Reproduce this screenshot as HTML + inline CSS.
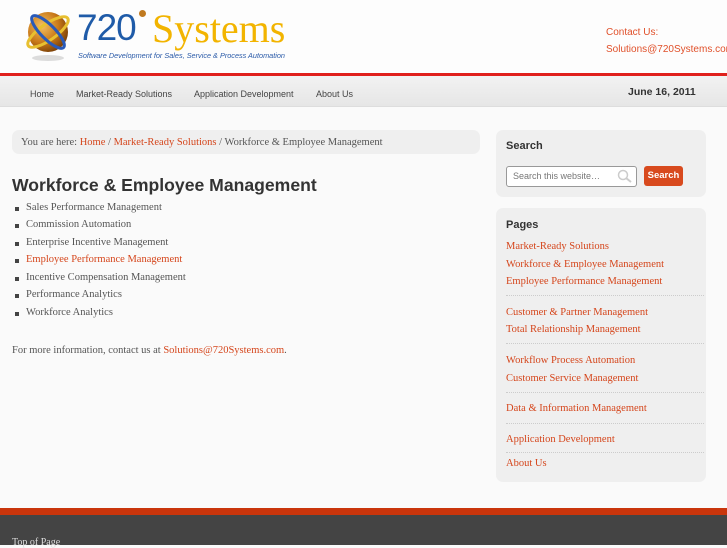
<!DOCTYPE html>
<html><head><meta charset="utf-8"><style>
*{margin:0;padding:0;box-sizing:border-box}
body{width:727px;height:545px;overflow:hidden;background:#fafafa;font-family:"Liberation Serif",serif;color:#555;position:relative}
.a{position:absolute}
a{color:#d5461c;text-decoration:none}
.sans{font-family:"Liberation Sans",sans-serif}
#hdr{left:0;top:0;width:727px;height:73px;background:#fdfdfd}
#red{left:0;top:73px;width:727px;height:3px;background:#e0201c}
#nav{left:0;top:76px;width:727px;height:31px;background:linear-gradient(#f2f2f2,#e6e6e6);border-bottom:1px solid #ddd}
#nav span{position:absolute;top:12px;font-size:9px;color:#444}
.box{background:#efefef;border-radius:7px}
ul{list-style:none}
li{font-size:10.5px;height:17.6px;position:relative;padding-left:15px;color:#555}
li:before{content:"";position:absolute;left:4px;top:5px;width:4px;height:4px;background:#444}
.pl{font-size:10.5px;display:block;position:absolute;left:10px}
.sep{position:absolute;left:10px;width:198px;border-top:1px dotted #ccc}
</style></head><body>
<div class="a" id="hdr"></div>
<svg class="a" style="left:22px;top:8px" width="52" height="56" viewBox="0 0 52 56">
<ellipse cx="26" cy="50" rx="16" ry="3" fill="#bbb" opacity=".5"/>
<defs><radialGradient id="g" cx=".35" cy=".35" r=".7"><stop offset="0" stop-color="#f5c060"/><stop offset=".6" stop-color="#c87818"/><stop offset="1" stop-color="#7a4008"/></radialGradient></defs>
<circle cx="26" cy="24" r="20" fill="url(#g)"/>
<ellipse cx="26" cy="24" rx="24" ry="8" fill="none" stroke="#e8c030" stroke-width="3" transform="rotate(-35 26 24)"/>
<ellipse cx="26" cy="24" rx="22" ry="7" fill="none" stroke="#2a5ab8" stroke-width="3" transform="rotate(45 26 24)"/>
</svg>
<div class="a sans" style="left:77px;top:7px;font-size:37px;color:#1f5ba8;letter-spacing:-1px">720</div>
<div class="a" style="left:139px;top:10px;width:7px;height:7px;border-radius:50%;background:#c07a20"></div>
<div class="a" style="left:152px;top:6px;font-size:40px;color:#f2b400;line-height:46px">Systems</div>
<div class="a sans" style="left:78px;top:51px;font-size:7.3px;color:#2a5aa8;font-style:italic">Software Development for Sales, Service &amp; Process Automation</div>
<div class="a sans" style="left:606px;top:27px;font-size:10px;color:#e0502a">Contact Us:</div>
<div class="a sans" style="left:606px;top:44px;font-size:10px;color:#e0502a;white-space:nowrap">Solutions@720Systems.com</div>
<div class="a" id="red"></div>
<div class="a sans" id="nav">
<span style="left:30px;top:12.5px">Home</span><span style="left:76px;top:12.5px">Market-Ready Solutions</span><span style="left:194px;top:12.5px">Application Development</span><span style="left:316px;top:12.5px">About Us</span>
<span style="left:628px;top:10px;font-size:10.5px;font-weight:bold;color:#333">June 16, 2011</span></div>
<div class="a box" style="left:12px;top:130px;width:468px;height:24px"></div>
<div class="a" style="left:21px;top:136.5px;font-size:10.5px;white-space:nowrap">You are here: <a>Home</a> / <a>Market-Ready Solutions</a> / Workforce &amp; Employee Management</div>
<div class="a sans" style="left:12px;top:175px;font-size:17.6px;color:#333;font-weight:bold">Workforce &amp; Employee Management</div>
<ul class="a" style="left:11px;top:201.5px">
<li>Sales Performance Management</li><li>Commission Automation</li><li>Enterprise Incentive Management</li><li><a>Employee Performance Management</a></li><li>Incentive Compensation Management</li><li>Performance Analytics</li><li>Workforce Analytics</li></ul>
<div class="a" style="left:12px;top:345px;font-size:10.5px">For more information, contact us at <a>Solutions@720Systems.com</a>.</div>
<div class="a box" style="left:496px;top:130px;width:210px;height:67px"></div>
<div class="a sans" style="left:506px;top:139.5px;font-size:11px;font-weight:bold;color:#333">Search</div>
<div class="a sans" style="left:506px;top:166px;width:131px;height:21px;border:1px solid #999;border-radius:3px;background:#fff;font-size:9px;color:#777;padding:4px 6px">Search this website…</div>
<svg class="a" style="left:617px;top:169px" width="16" height="14"><circle cx="6" cy="6" r="4.5" fill="none" stroke="#ccc" stroke-width="1.5"/><line x1="9" y1="9" x2="14" y2="13" stroke="#ccc" stroke-width="2"/></svg>
<div class="a sans" style="left:644px;top:166px;width:39px;height:20px;border-radius:3px;background:#d84a1e;color:#fff;font-size:9.5px;font-weight:bold;text-align:center;line-height:20px">Search</div>
<div class="a box" style="left:496px;top:208px;width:210px;height:274px">
<div class="sans" style="position:absolute;left:10px;top:11px;font-size:11px;font-weight:bold;color:#333">Pages</div>
<a class="pl" style="top:32.5px">Market-Ready Solutions</a>
<a class="pl" style="top:50.5px">Workforce &amp; Employee Management</a>
<a class="pl" style="top:67.5px">Employee Performance Management</a>
<div class="sep" style="top:87px"></div>
<a class="pl" style="top:98.5px">Customer &amp; Partner Management</a>
<a class="pl" style="top:115.5px">Total Relationship Management</a>
<div class="sep" style="top:135px"></div>
<a class="pl" style="top:146.5px">Workflow Process Automation</a>
<a class="pl" style="top:164.5px">Customer Service Management</a>
<div class="sep" style="top:184px"></div>
<a class="pl" style="top:194.5px">Data &amp; Information Management</a>
<div class="sep" style="top:215px"></div>
<a class="pl" style="top:225.5px">Application Development</a>
<div class="sep" style="top:244px"></div>
<a class="pl" style="top:249.5px">About Us</a>
</div>
<div class="a" style="left:0;top:508px;width:727px;height:7px;background:#c9350c"></div>
<div class="a" style="left:0;top:515px;width:727px;height:30px;background:#444"></div>
<div class="a" style="left:12px;top:537px;font-size:10px;color:#ddd">Top of Page</div>
</body></html>
